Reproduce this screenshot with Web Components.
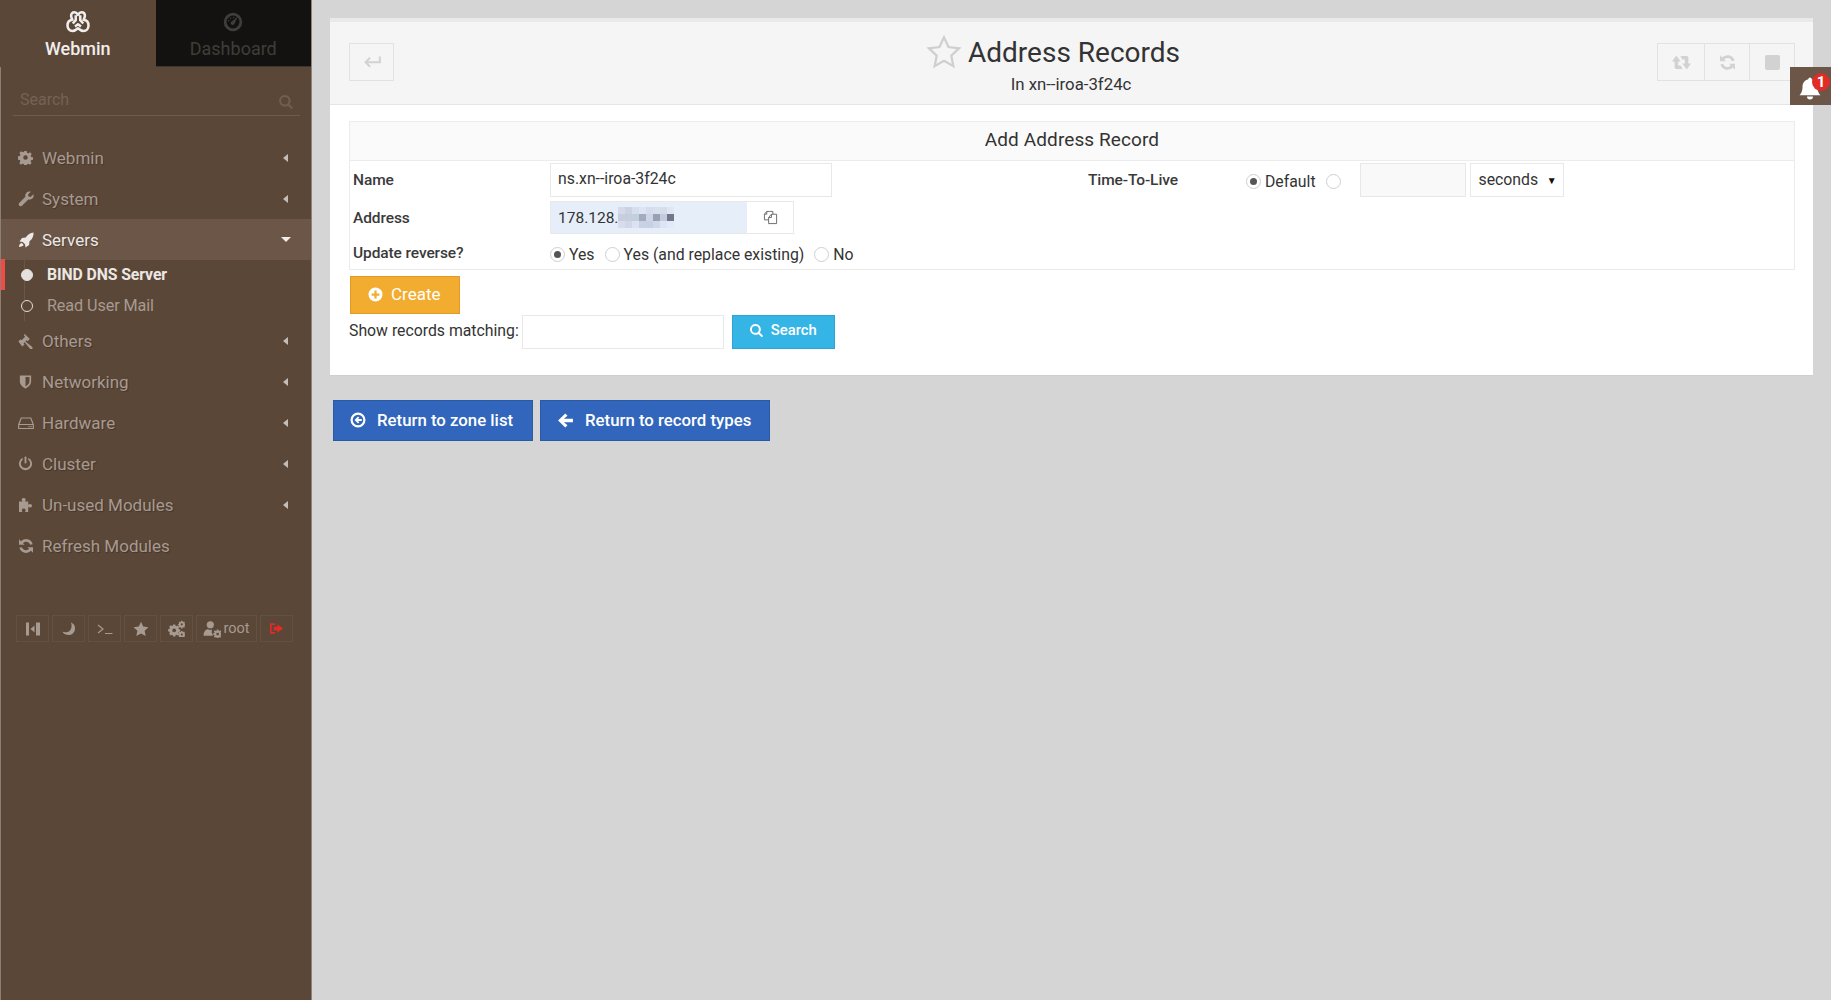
<!DOCTYPE html>
<html>
<head>
<meta charset="utf-8">
<title>Address Records</title>
<style>
  html, body { margin: 0; height: 100%; }
  body {
    background: #d5d5d5;
    font-family: Roboto, "Liberation Sans", sans-serif;
    overflow: hidden;
  }
  .page { display: flex; height: 1000px; }
</style>
</head>
<body>
<div class="page">
  <wm-sidebar></wm-sidebar>
  <wm-main></wm-main>
</div>

<script>
// icon paths, all drawn on a 16x16 box
const ICONS = {
  gear: `<path fill-rule="evenodd" d="M6.700 1h2.600l.4 2 1.300.6 1.800-1.100 1.800 1.800-1.100 1.800.6 1.300 1.900.4v2.600l-2 .4-.6 1.300 1.100 1.800-1.800 1.800-1.800-1.100-1.300.6-.4 1.900H6.700l-.4-2-1.300-.6-1.800 1.100-1.800-1.800 1.100-1.800-.6-1.300-1.900-.4V6.700l2-.4.6-1.300-1.100-1.800 1.800-1.800 1.800 1.100 1.300-.6zM8 5.600a2.400 2.400 0 1 0 0 4.800 2.400 2.400 0 0 0 0-4.800z"/>`,
  wrench: `<path d="M15.400 3.200c.5 1.600.1 3.300-1.100 4.400-1.100 1-2.600 1.400-4 1L4 14.800c-.7.7-1.900.7-2.600 0l-.2-.2c-.7-.7-.7-1.900 0-2.600l6.200-6.200c-.4-1.400 0-2.900 1-4C9.500.7 11.200.3 12.800.8L10 3.500l.5 2 2 .5z"/>`,
  rocket: `<path d="M15.500.5c.3 3.500-1 6.500-4 8.800l-.4 3.700-3.600 2.500-.5-3.200L4.700 10 1.500 9.500 4 5.900l3.700-.4C10 2.500 12 .8 15.500.5zM3.300 11c1 .2 2 1.200 2.300 2.300-1.200 1.200-3.200 1.700-4.600 1.700 0-1.400.5-3.400 2.300-4z"/>`,
  gavel: `<path d="M6.500.8l5.300 5.300-2.200 2.200-1-1-1.200 1.200 6.600 5.300c.7.6.7 1.500.1 2.100-.6.6-1.500.6-2.100-.1L6.700 9.200 5.500 10.400l1 1-2.200 2.200L.4 8.400l2.200-2.200 1 1L7.100 3.700l-1-1z"/>`,
  shield: `<path fill-rule="evenodd" d="M2 1.500h12v6.500c0 3.500-3 6-6 7.500-3-1.500-6-4-6-7.500zM8 3.300v10c2.100-1.200 4.200-3 4.200-5.300V3.300z"/>`,
  hdd: `<path fill="none" stroke="currentColor" stroke-width="1.200" d="M.7 9.500L3.200 3h9.600l2.500 6.500V13.500H.7zM.7 9.500h14.600"/><rect x="10.500" y="11" width="1.200" height="1.200"/><rect x="12.500" y="11" width="1.200" height="1.200"/>`,
  power: `<path d="M5 1.800v2.100a5 5 0 1 0 6 0V1.800a7 7 0 1 1-6 0z"/><rect x="7" y=".5" width="2" height="7.500" rx=".8"/>`,
  puzzle: `<path d="M1 4.500h3.500C4 3.800 3.700 3.200 3.700 2.700 3.700 1.500 4.700 1 5.700 1s2 .5 2 1.700c0 .5-.3 1.100-.8 1.800h3.300v3.300c.7-.5 1.300-.8 1.800-.8 1.200 0 2 .8 2 1.800s-.8 1.800-2 1.800c-.5 0-1.100-.3-1.800-.8V15H7c.4-.7.6-1.200.6-1.700 0-1-.8-1.800-1.900-1.800s-1.900.8-1.900 1.800c0 .5.2 1 .6 1.700H1z"/>`,
  refresh: `<path fill="none" stroke="currentColor" stroke-width="2.600" d="M13.400 6.500A5.600 5.600 0 0 0 3.600 4.600M2.600 9.500A5.600 5.600 0 0 0 12.400 11.400"/><path d="M1 1.200v5.600h5.600zM15 14.800V9.200H9.400z"/>`,
  search: `<path fill-rule="evenodd" d="M6.800 1a5.800 5.800 0 0 1 4.700 9.200l3.600 3.600-1.500 1.500-3.600-3.600A5.800 5.800 0 1 1 6.800 1zm0 2.100a3.700 3.700 0 1 0 0 7.400 3.700 3.700 0 0 0 0-7.400z"/>`,
  star: `<path d="M8 .8l2.200 4.800 5.300.6-3.900 3.600 1.100 5.200L8 12.400l-4.700 2.600 1.100-5.200L.5 6.200l5.300-.6z"/>`,
  gears: `<path fill-rule="evenodd" d="M4.800 4.200h2l.3 1.300.8.4 1.200-.7 1.400 1.400-.7 1.200.4.800 1.300.3v2l-1.300.3-.4.8.7 1.200-1.400 1.400-1.200-.7-.8.4-.3 1.300h-2l-.3-1.300-.8-.4-1.200.7L1.100 13l.7-1.200-.4-.8L.1 10.700v-2l1.300-.3.4-.8-.7-1.200 1.400-1.400 1.200.7.8-.4zm1 3.700a1.800 1.800 0 1 0 0 3.600 1.800 1.800 0 0 0 0-3.600z"/><path fill-rule="evenodd" d="M12.400.7h1.200l.2.8.5.3.8-.4.8.9-.4.7.2.5.8.3v1.200l-.8.2-.2.5.4.7-.8.9-.8-.4-.5.2-.2.8h-1.200l-.2-.8-.5-.2-.7.4-.9-.9.4-.7-.2-.5-.8-.2V3.800l.8-.2.2-.5-.4-.8.9-.8.7.4.5-.3zm.6 2.400a1 1 0 1 0 0 2 1 1 0 0 0 0-2z"/><path fill-rule="evenodd" d="M12.400 10.300h1.200l.2.8.5.2.8-.4.8.9-.4.7.2.5.8.2v1.200l-.8.2-.2.5.4.7-.8.9-.8-.4-.5.2-.2.5h-1.200l-.2-.5-.5-.2-.7.4-.9-.9.4-.7-.2-.5-.8-.2v-1.200l.8-.2.2-.5-.4-.7.9-.9.7.4.5-.2zm.6 2.400a1 1 0 1 0 0 2 1 1 0 0 0 0-2z"/>`,
  retweet: `<path d="M3.600 2.200L7.400 7.200H5.200V10.600H7.200L9 13.400H3.800C2.800 13.400 2.200 12.800 2.200 12V7.200H0z"/><path d="M12.400 13.800L8.600 8.800H10.800V5.400H8.800L7 2.600H12.200C13.200 2.600 13.800 3.200 13.800 4V8.800H16z"/>`,
  signout: `<path d="M1 2.500h5.500v1.800H2.800v7.400h3.700v1.800H1z"/><path d="M9 3.500l6 4.500-6 4.500V10H5V6h4z"/>`,
  plus: `<path fill-rule="evenodd" d="M8 .5a7.500 7.500 0 1 1 0 15 7.500 7.500 0 0 1 0-15zM6.800 3.800v3H3.800v2.400h3v3h2.400v-3h3V6.800h-3v-3z"/>`,
  backCircle: `<path fill-rule="evenodd" d="M8 .5a7.500 7.500 0 1 1 0 15 7.500 7.500 0 0 1 0-15zm0 2.200a5.300 5.300 0 1 0 0 10.600A5.300 5.300 0 0 0 8 2.700z"/><path d="M8 4.500l1.300 1.300-1.300 1.200h3.800v2H8l1.300 1.200L8 11.500 4.500 8z"/>`,
  arrowLeft: `<path d="M7.800 1.500L9.900 3.600 6.500 6.400H15V9.600H6.500L9.900 12.400 7.800 14.500 1 8z"/>`,
  userCog: `<path d="M6.500 1a3.200 3.200 0 1 1 0 6.400 3.200 3.200 0 0 1 0-6.400z"/><path d="M.5 14c0-3.500 1.800-5.800 4-5.800.6.400 1.200.6 2 .6s1-.1 1.500-.3l-.3 2.500 1 2.100V14z"/><path fill-rule="evenodd" d="M12.300 8.500h1.400l.2 1 .6.3 1-.6.7.9-.6.9.2.6 1 .2v1.400l-1 .2-.2.6.6.9-.7.9-1-.6-.6.3-.2 1h-1.400l-.2-1-.6-.3-.9.6-.9-.9.6-.9-.2-.6-1-.2v-1.400l1-.2.2-.6-.6-.9.9-.9.9.6.6-.3zm.7 2.800a1.200 1.200 0 1 0 0 2.400 1.200 1.200 0 0 0 0-2.400z"/>`,
  bell: `<path d="M8 1a1.300 1.300 0 0 1 1.200 1.100C11.500 2.700 13 4.700 13 7.200c0 3 .8 4.300 2 5.600H1c1.200-1.300 2-2.600 2-5.600 0-2.500 1.500-4.500 3.800-5.100A1.300 1.300 0 0 1 8 1zM6 13.700h4a2 2 0 0 1-4 0z"/>`,
  copy: `<path fill="none" stroke="currentColor" stroke-width="1" d="M7 1.500H4L1.500 4.500V10.500H6M4 1.500V4.500H1.500M7 1.500h3.500V4.500M9 4.500H14.500V14.500H6V8L9 4.500zM9 4.500V8H6"/>`,
  enter: `<path fill="none" stroke="currentColor" stroke-width="1.800" d="M15 3v5.300H2.500M6.300 4.300L2.300 8.300l4 4"/>`,
  moon: `<path d="M10.500 1.500C13.500 2.500 15 5 15 8A7 7 0 0 1 8 15C5.500 15 3 13.800 1.500 11.500 5.500 12.800 8.500 11.500 10 9.500 11.500 7 11.800 4 10.500 1.500z"/>`,
  collapse: `<rect x="1" y="1.500" width="3" height="13"/><rect x="11" y="1.500" width="4" height="13"/><path d="M9.500 4.500v7L5.500 8z"/>`,
  term: `<path fill="none" stroke="currentColor" stroke-width="1.200" d="M1 4l5 4-5 4M8 12.500h7.500"/>`,
  dashboard: `<path fill-rule="evenodd" d="M8 .6a7.400 7.400 0 1 1 0 14.800A7.400 7.400 0 0 1 8 .6zm0 2.200a5.200 5.200 0 1 0 0 10.400A5.200 5.200 0 0 0 8 2.800z"/><path d="M11.800 3.600L9.300 9a1.600 1.600 0 1 1-2-1.700z"/><circle cx="4.500" cy="7" r=".6"/><circle cx="6" cy="5" r=".6"/><circle cx="8.500" cy="4.300" r=".6"/>`,
  logo: `<path fill="none" stroke="currentColor" stroke-width="1.700" stroke-linejoin="round" d="M5.600 1.500c1.100 0 1.800.7 2.400 1.700.6-1 1.300-1.700 2.400-1.700 1.400 0 2.200 1.100 2.200 2.300 0 1-.4 1.800-.9 2.700 1.600.2 3.300 1.400 3.300 3.800 0 2-1.400 3.700-3.300 3.700-1.500 0-2.700-.9-3.700-1.800-1 .9-2.200 1.800-3.700 1.800-1.900 0-3.300-1.700-3.300-3.700 0-2.400 1.700-3.600 3.300-3.800-.5-.9-.9-1.700-.9-2.700 0-1.200.8-2.300 2.200-2.300zM6.500 3.500v3.300L4.500 9M9.500 3.500v3.300l2 2.200M6 11l2-1.500 2 1.500"/>`
};

// generic svg icon, colour comes from the host
class WmIcon extends HTMLElement {
  static get observedAttributes() { return ["name", "size"]; }
  constructor() {
    super();
    this.attachShadow({ mode: "open" });
  }
  connectedCallback() { this.render(); }
  attributeChangedCallback() { this.render(); }
  render() {
    const size = this.getAttribute("size") || 16;
    const name = this.getAttribute("name");
    this.shadowRoot.innerHTML = `
      <style>
        :host { display: inline-flex; flex: none; line-height: 0; }
        svg { fill: currentColor; }
      </style>
      <svg width="${size}" height="${size}" viewBox="0 0 16 16">${ICONS[name] || ""}</svg>`;
  }
}
customElements.define("wm-icon", WmIcon);

// one row of the side menu
class WmMenuItem extends HTMLElement {
  constructor() {
    super();
    this.attachShadow({ mode: "open" });
  }
  connectedCallback() {
    const icon = this.getAttribute("icon");
    const open = this.hasAttribute("open");
    const arrow = this.hasAttribute("noarrow") ? "" : `<span class="arrow ${open ? "down" : ""}"></span>`;
    this.shadowRoot.innerHTML = `
      <style>
        :host {
          display: flex;
          align-items: center;
          height: 41px;
          box-sizing: border-box;
          padding: 0 23px 0 17px;
          font-size: 17px;
          color: #a69a91;
          text-shadow: 1px 1px 1px rgba(0,0,0,.25);
        }
        :host([open]) { background: #6b5647; color: #ece8e5; }
        .ico { width: 24px; display: flex; color: inherit; }
        .lbl { flex: 1; }
        .arrow {
          width: 0; height: 0;
          border-top: 4px solid transparent;
          border-bottom: 4px solid transparent;
          border-right: 5px solid #c5bdb7;
        }
        .arrow.down {
          border-left: 5px solid transparent;
          border-right: 5px solid transparent;
          border-top: 5px solid #f0eeec;
          border-bottom: 0;
          margin-right: -3px;
        }
      </style>
      <span class="ico"><wm-icon name="${icon}" size="${this.getAttribute("isize") || 16}"></wm-icon></span>
      <span class="lbl"><slot></slot></span>
      ${arrow}`;
  }
}
customElements.define("wm-menu-item", WmMenuItem);

class WmSubItem extends HTMLElement {
  constructor() {
    super();
    this.attachShadow({ mode: "open" });
  }
  connectedCallback() {
    this.shadowRoot.innerHTML = `
      <style>
        :host {
          display: flex;
          align-items: center;
          height: 31px;
          padding-left: 20px;
          font-size: 16.200px;
          letter-spacing: -.1px;
          color: #a69a91;
          position: relative;
        }
        :host([active]) { color: #ebe7e4; font-weight: 700; font-size: 15.800px; }
        :host([active])::before {
          content: "";
          position: absolute;
          left: 0; top: 0; bottom: 0;
          width: 4px;
          background: #f14a47;
        }
        /* tree line behind the dots */
        :host::after {
          content: "";
          position: absolute;
          left: 23px; top: 0; bottom: 0;
          width: 1px;
          background: #6a5647;
        }
        .dot {
          width: 10px; height: 10px;
          border: 1.500px solid #e4e0dc;
          border-radius: 50%;
          margin-right: 14px;
          background: #5b4738;
          position: relative;
          z-index: 1;
        }
        :host([active]) .dot { background: #e4e0dc; }
      </style>
      <span class="dot"></span><slot></slot>`;
  }
}
customElements.define("wm-sub-item", WmSubItem);

class WmToolBtn extends HTMLElement {
  constructor() {
    super();
    this.attachShadow({ mode: "open" });
  }
  connectedCallback() {
    this.shadowRoot.innerHTML = `
      <style>
        :host {
          display: inline-flex;
          align-items: center;
          justify-content: center;
          gap: 2px;
          height: 27px;
          min-width: 33px;
          box-sizing: border-box;
          border: 1px solid #635042;
          color: #a69a91;
          font-size: 14.500px;
        }
      </style>
      <slot></slot>`;
  }
}
customElements.define("wm-tool-btn", WmToolBtn);

class WmSidebar extends HTMLElement {
  constructor() {
    super();
    this.attachShadow({ mode: "open" });
  }
  connectedCallback() {
    this.shadowRoot.innerHTML = `
      <style>
        :host {
          display: block;
          flex: none;
          width: 312px;
          height: 1000px;
          box-sizing: border-box;
          background: #5b4738;
          border-left: 1px solid #8d7f75;
          border-right: 1px solid #8f8277;
        }
        .tabs { display: flex; height: 67px; margin-left: -1px; }
        .tab {
          flex: 1;
          display: flex;
          flex-direction: column;
          align-items: center;
          padding-top: 5px;
          box-sizing: border-box;
          font-size: 18px;
        }
        .tab .pic { height: 33px; display: flex; align-items: center; }
        .tab.on { color: #f0eeec; font-weight: 500; background: #5b4738; }
        .tab.off { color: #403d3a; background: #131210; border-bottom: 1px solid #3a3632; }
        .search {
          display: flex;
          align-items: center;
          justify-content: space-between;
          margin: 16px 11px 0 12px;
          height: 33px;
          box-sizing: border-box;
          padding: 0 6px 0 7px;
          border-bottom: 1px solid #6f5c4e;
          font-size: 16px;
          color: #736255;
        }
        .search wm-icon { color: #6f5e51; margin-top: 5px; }
        nav { display: flex; flex-direction: column; margin-top: 21px; }
        .subs { margin: -1px 0 -1px; }
        .tools { display: flex; gap: 3px; margin: 49px 0 0 15px; }
      </style>
      <div class="tabs">
        <div class="tab on"><span class="pic"><wm-icon name="logo" size="24"></wm-icon></span>Webmin</div>
        <div class="tab off"><span class="pic"><wm-icon name="dashboard" size="20"></wm-icon></span>Dashboard</div>
      </div>
      <div class="search"><span>Search</span><wm-icon name="search" size="16"></wm-icon></div>
      <nav>
        <wm-menu-item icon="gear" isize="15">Webmin</wm-menu-item>
        <wm-menu-item icon="wrench">System</wm-menu-item>
        <wm-menu-item icon="rocket" open>Servers</wm-menu-item>
        <div class="subs">
          <wm-sub-item active>BIND DNS Server</wm-sub-item>
          <wm-sub-item>Read User Mail</wm-sub-item>
        </div>
        <wm-menu-item icon="gavel">Others</wm-menu-item>
        <wm-menu-item icon="shield" isize="15">Networking</wm-menu-item>
        <wm-menu-item icon="hdd">Hardware</wm-menu-item>
        <wm-menu-item icon="power" isize="15">Cluster</wm-menu-item>
        <wm-menu-item icon="puzzle">Un-used Modules</wm-menu-item>
        <wm-menu-item icon="refresh" noarrow>Refresh Modules</wm-menu-item>
      </nav>
      <div class="tools">
        <wm-tool-btn><wm-icon name="collapse" size="16"></wm-icon></wm-tool-btn>
        <wm-tool-btn><wm-icon name="moon" size="15"></wm-icon></wm-tool-btn>
        <wm-tool-btn><wm-icon name="term" size="16"></wm-icon></wm-tool-btn>
        <wm-tool-btn><wm-icon name="star" size="16"></wm-icon></wm-tool-btn>
        <wm-tool-btn><wm-icon name="gears" size="17"></wm-icon></wm-tool-btn>
        <wm-tool-btn style="width:61px"><wm-icon name="userCog" size="18"></wm-icon><span>root</span></wm-tool-btn>
        <wm-tool-btn><wm-icon name="signout" size="15" style="color:#e02b27"></wm-icon></wm-tool-btn>
      </div>`;
  }
}
customElements.define("wm-sidebar", WmSidebar);

// flat coloured button with an icon in front of the label
class WmButton extends HTMLElement {
  constructor() {
    super();
    this.attachShadow({ mode: "open" });
  }
  connectedCallback() {
    this.shadowRoot.innerHTML = `
      <style>
        :host {
          display: inline-flex;
          align-items: center;
          box-sizing: border-box;
          color: #fff;
          border: 1px solid;
          font-weight: 500;
          flex: none;
        }
        :host([kind=create]) { background: #f2ac2f; border-color: #e09a25; width: 110px; height: 38px; padding: 0 0 2px 17px; gap: 8px; font-size: 17px; font-weight: 400; }
        :host([kind=search]) { background: #35b4e6; border-color: #2ea3d1; width: 103px; height: 34px; padding: 0 0 4px 16px; gap: 7px; font-size: 14.800px; }
        :host([kind=nav]) { background: #3166bc; border-color: #285aa6; height: 41px; padding: 0 0 1px 16px; gap: 11px; font-size: 16.800px; }
      </style>
      <wm-icon name="${this.getAttribute("icon")}" size="${this.getAttribute("isize") || 16}"></wm-icon>
      <slot></slot>`;
  }
}
customElements.define("wm-button", WmButton);

class WmRadio extends HTMLElement {
  constructor() {
    super();
    this.attachShadow({ mode: "open" });
  }
  connectedCallback() {
    this.shadowRoot.innerHTML = `
      <style>
        :host { display: inline-flex; align-items: center; gap: 4px; font-size: 15.800px; color: #333; }
        .c {
          width: 13px; height: 13px;
          border: 1px solid #cfcfcf;
          border-radius: 50%;
          display: flex; align-items: center; justify-content: center;
          background: #fff;
          flex: none;
        }
        :host([checked]) .c::after {
          content: ""; width: 7px; height: 7px; border-radius: 50%; background: #555;
        }
      </style>
      <span class="c"></span><slot></slot>`;
  }
}
customElements.define("wm-radio", WmRadio);

// pixelated patch standing in for the hidden part of the address
const BLUR = [
  ["#d5d9ea","#cbd2e3","#d6deee","#dde5f4","#d5ddec","#d8dfee","#d5dcec","#dfe7f5"],
  ["#c9cedf","#c6cddd","#c2d0de","#a2acbc","#cdd6e6","#98a1b3","#c4cbdc","#72778c"],
  ["#d8dcec","#d0d7e6","#dbe3f2","#c9d2e4","#c8d1e3","#d0d8e8","#dde5f4","#e2eaf8"]
];

class WmMain extends HTMLElement {
  constructor() {
    super();
    this.attachShadow({ mode: "open" });
  }
  connectedCallback() {
    const blur = BLUR.map((row, y) => row.map((c, x) =>
      `<rect x="${x * 7}" y="${y * 7}" width="7" height="7" fill="${c}"/>`).join("")).join("");
    this.shadowRoot.innerHTML = `
      <style>
        :host {
          display: block;
          flex: 1;
          min-width: 0;
          padding: 18px 18px 0 18px;
          color: #333;
          font-size: 15.800px;
          position: relative;
        }
        .panel { background: #fff; border-top: 4px solid #e9e9e9; border-bottom: 1px solid #cfcfcf; height: 358px; box-sizing: border-box; }
        header {
          height: 83px;
          box-sizing: border-box;
          background: #f5f5f5;
          border-bottom: 1px solid #e6e6e6;
          display: grid;
          grid-template-columns: 1fr auto 1fr;
          padding: 21px 18px 0 19px;
        }
        .hbtn {
          display: flex; align-items: center; justify-content: center;
          height: 38px; box-sizing: border-box;
          border: 1px solid #e2e2e2;
          color: #d2d2d2;
        }
        .back { width: 45px; }
        .right { display: flex; justify-content: flex-end; }
        .right .hbtn + .hbtn { border-left: 0; }
        .title { display: flex; flex-direction: column; align-items: center; margin-top: -9px; }
        h1 { margin: 0; font-size: 28px; font-weight: 400; line-height: 35px; color: #333; display: flex; align-items: center; gap: 6px; margin-left: -38px; }
        .sub { font-size: 16.800px; line-height: 20px; margin-top: 4px; margin-left: -2px; }
        .body { padding: 16px 18px 0 19px; }
        .tbl { border: 1px solid #ececec; height: 149px; box-sizing: border-box; }
        .tbl-h { height: 38px; background: #fafafa; border-bottom: 1px solid #ececec; text-align: center; font-size: 19px; line-height: 36px; letter-spacing: .1px; }
        .grid {
          display: grid;
          grid-template-columns: 197px 538px 158px 1fr;
          grid-template-rows: 38px 37px 33px;
          align-items: center;
          padding-left: 3px;
        }
        label { font-weight: 500; font-size: 15.500px; letter-spacing: -.1px; color: #3a3a3a; }
        .inp {
          box-sizing: border-box;
          border: 1px solid #e8e8e8;
          background: #fff;
          height: 34px;
          padding-left: 7px;
          line-height: 30px;
          color: #333;
        }
        .ttl { display: flex; align-items: center; gap: 10px; }
        .addr { display: flex; height: 33px; width: 244px; border: 1px solid #e8e8e8; box-sizing: border-box; }
        .addr .val { width: 196px; box-sizing: border-box; background: #e6eefa; padding-left: 7px; display: flex; align-items: center; color: #333; font-size: 15.500px; }
        .addr .val svg { flex: none; }
        .addr .cp { flex: 1; display: flex; align-items: center; justify-content: center; color: #666; }
        .radios { display: flex; gap: 10px; margin-top: 3px; }
        .ttlradio { display: flex; align-items: center; gap: 10px; margin-top: 3px; }
        .select { display: flex; align-items: center; justify-content: space-between; width: 94px; height: 34px; box-sizing: border-box; border: 1px solid #e8e8e8; padding: 0 6px 2px 8px; }
        .select span:last-child { font-size: 10px; color: #111; margin-top: 2px; }
        .create { margin: 6px 0 0 1px; display: flex; }
        .match { display: flex; align-items: center; margin-top: 1px; }
        .match span { margin: -3px 3px 0 0; }
        .match .inp { width: 202px; margin-right: 8px; }
        .navs { display: flex; gap: 7px; margin: 24px 0 0 3px; }
        .bell {
          position: absolute;
          right: 0; top: 67px;
          width: 41px; height: 38px;
          background: #6b5647;
          color: #fff;
          display: flex; align-items: flex-end;
          padding: 0 0 5px 8px;
          box-sizing: border-box;
        }
        .badge {
          position: absolute;
          right: 1px; top: 6px;
          width: 18px; height: 18px;
          background: #e02b27;
          border-radius: 50%;
          color: #fff;
          font-size: 15px;
          font-weight: 700;
          text-align: center;
          line-height: 18px;
        }
      </style>
      <div class="panel">
        <header>
          <div><div class="hbtn back"><wm-icon name="enter" size="18"></wm-icon></div></div>
          <div class="title">
            <h1>
              <svg width="36" height="36" viewBox="0 0 32 32"><path fill="none" stroke="#cfcfcf" stroke-width="2" d="M16 3l4 8.600 9.400 1.200-6.900 6.500 1.800 9.300L16 23.900l-8.300 4.700 1.800-9.300-6.900-6.500 9.400-1.200z"/></svg>
              Address Records</h1>
            <div class="sub">In xn--iroa-3f24c</div>
          </div>
          <div class="right">
            <div class="hbtn" style="width:48px"><wm-icon name="retweet" size="19"></wm-icon></div>
            <div class="hbtn" style="width:45px"><wm-icon name="refresh" size="17"></wm-icon></div>
            <div class="hbtn" style="width:45px"><span style="width:15px;height:15px;background:#d2d2d2;border-radius:2px"></span></div>
          </div>
        </header>
        <div class="body">
          <div class="tbl">
            <div class="tbl-h">Add Address Record</div>
            <div class="grid">
              <label>Name</label>
              <div class="inp" style="width:282px">ns.xn--iroa-3f24c</div>
              <label>Time-To-Live</label>
              <div class="ttl">
                <div class="ttlradio"><wm-radio checked>Default</wm-radio><wm-radio></wm-radio></div>
                <div class="inp" style="width:106px;background:#f9f9f9;margin-left:9px"></div>
                <div class="select" style="margin-left:-6px"><span>seconds</span><span>&#9660;</span></div>
              </div>
              <label>Address</label>
              <div class="addr">
                <div class="val">178.128.<svg width="56" height="21" viewBox="0 0 56 21">${blur}</svg></div>
                <div class="cp"><wm-icon name="copy" size="15"></wm-icon></div>
              </div>
              <span></span><span></span>
              <label>Update reverse?</label>
              <div class="radios" style="grid-column:2 / 5"><wm-radio checked>Yes</wm-radio><wm-radio>Yes (and replace existing)</wm-radio><wm-radio>No</wm-radio></div>
            </div>
          </div>
          <div class="create"><wm-button kind="create" icon="plus" isize="15">Create</wm-button></div>
          <div class="match">
            <span>Show records matching:</span>
            <div class="inp"></div>
            <wm-button kind="search" icon="search" isize="15">Search</wm-button>
          </div>
        </div>
      </div>
      <div class="navs">
        <wm-button kind="nav" icon="backCircle" style="width:200px">Return to zone list</wm-button>
        <wm-button kind="nav" icon="arrowLeft" isize="17" style="width:230px">Return to record types</wm-button>
      </div>
      <div class="bell"><wm-icon name="bell" size="24"></wm-icon><span class="badge">1</span></div>`;
  }
}
customElements.define("wm-main", WmMain);
</script>
</body>
</html>
